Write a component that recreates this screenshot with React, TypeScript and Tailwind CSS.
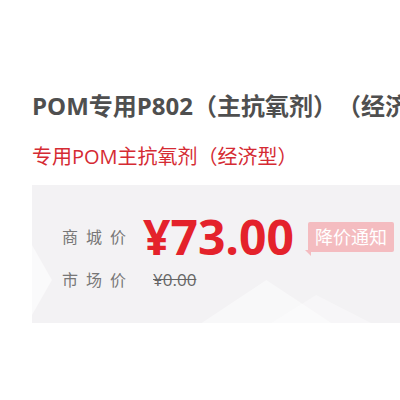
import type { FC } from 'react';

const font = { fontFamily: '"Open Sans", "Noto Sans CJK SC", sans-serif' };

// faint mountain shapes behind the price box
const Backdrop: FC = () => (
  <svg className="absolute inset-0 w-full h-full" viewBox="0 0 369 138" preserveAspectRatio="none">
    <polygon points="0,60 20,95 0,130" fill="#ffffff" opacity="0.6" />
    <polygon points="170,138 235,95 300,138" fill="#ffffff" opacity="0.45" />
    <polygon points="240,138 285,110 340,138" fill="#ffffff" opacity="0.35" />
  </svg>
);

const App: FC = () => {
  return (
    <div className="w-[400px] h-[400px] bg-white overflow-hidden [text-spacing-trim:space-all]" style={font}>
      <div className="pl-[32px] pt-[90px]">
        <h1 className="text-[24px] leading-[32px] font-bold text-[#4f4f4f] whitespace-nowrap">
          POM专用P802（主抗氧剂）（经济型）
        </h1>
        <p className="mt-[21px] text-[20px] leading-[28px] text-[#d52b33] whitespace-nowrap">
          专用POM主抗氧剂（经济型）
        </p>

        <div className="relative mt-[14px] h-[138px] bg-[#f3f2f4] pl-[30px] pt-[27px]">
          <Backdrop />
          <div className="relative flex items-center h-[50px]">
            <span className="text-[16px] tracking-[8px] text-[#777777]">商城价</span>
            <span className="ml-[9px] text-[48px] leading-[50px] font-bold text-[#e4222b]">¥73.00</span>
            <div className="relative ml-[14px] h-[30px] px-[7px] flex items-center bg-[#f4bcc0] rounded-[2px]">
              <span className="text-[18px] text-white whitespace-nowrap">降价通知</span>
              <span className="absolute left-[-3px] bottom-[-4px] w-0 h-0 border-t-[6px] border-t-[#f4bcc0] border-l-[6px] border-l-transparent" />
            </div>
          </div>
          <div className="relative flex items-center h-[24px] mt-[6px]">
            <span className="text-[16px] tracking-[8px] text-[#777777]">市场价</span>
            <span className="ml-[19px] text-[17px] text-[#666666] line-through">¥0.00</span>
          </div>
        </div>
      </div>
    </div>
  );
};

export default App;
